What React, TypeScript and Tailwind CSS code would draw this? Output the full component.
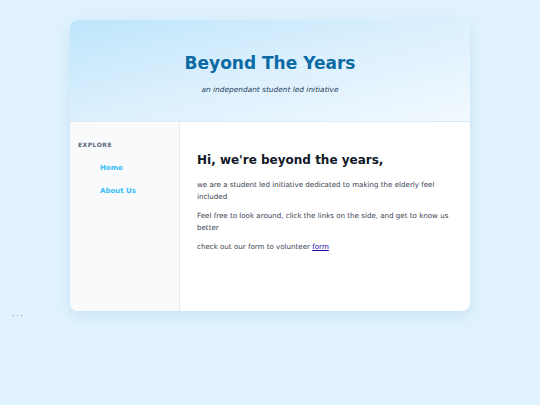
export default function App() {
  return (
    <div
      className="min-h-[405px] w-full bg-[#e0f2fe] pt-[20px]"
      style={{ fontFamily: '"DejaVu Sans", Verdana, sans-serif' }}
    >
      {/* Card */}
      <div className="mx-auto w-[400px] overflow-hidden rounded-[8px] bg-white shadow-[0_4px_14px_rgba(14,116,144,0.12)]">
        {/* Header */}
        <header className="flex h-[102px] flex-col items-center border-b border-[#dbeaf5] bg-gradient-to-br from-[#bde5fb] via-[#dcf0fd] to-[#f2f9ff] pt-[33px]">
          <h1 className="text-[17px] font-bold leading-[20px] text-[#0b69a3]">Beyond The Years</h1>
          <p className="mt-[12px] text-[7.4px] italic leading-[10px] text-[#263f5c]">
            an independant student led initiative
          </p>
        </header>

        <div className="flex h-[189px]">
          {/* Sidebar */}
          <aside className="w-[110px] shrink-0 border-r border-[#e5eaf0] bg-[#f8fafc] pl-[8px] pt-[19px]">
            <div className="text-[6px] font-bold uppercase leading-[8px] tracking-[0.5px] text-[#5b6678]">
              Explore
            </div>
            <nav className="mt-[14px] flex flex-col gap-[13px] pl-[22px]">
              <a className="text-[7px] font-bold leading-[10px] text-[#38bdf8]">Home</a>
              <a className="text-[7px] font-bold leading-[10px] text-[#38bdf8]">About Us</a>
            </nav>
          </aside>

          {/* Main */}
          <main className="flex-1 px-[17px] pt-[31px]">
            <h2 className="text-[12px] font-bold leading-[15px] text-[#111827]">
              Hi, we're beyond the years,
            </h2>
            <div className="mt-[11px] flex flex-col gap-[7.5px] text-[7.1px] leading-[11.75px] text-[#374151]">
              <p>we are a student led initiative dedicated to making the elderly feel included</p>
              <p>Feel free to look around, click the links on the side, and get to know us better</p>
              <p>
                check out our form to volunteer{' '}
                <a className="text-[#1a0dab] underline">form</a>
              </p>
            </div>
          </main>
        </div>
      </div>

      <div className="pl-[12px] text-[7px] leading-[6px] tracking-[2px] text-[#64748b]">...</div>
    </div>
  )
}
